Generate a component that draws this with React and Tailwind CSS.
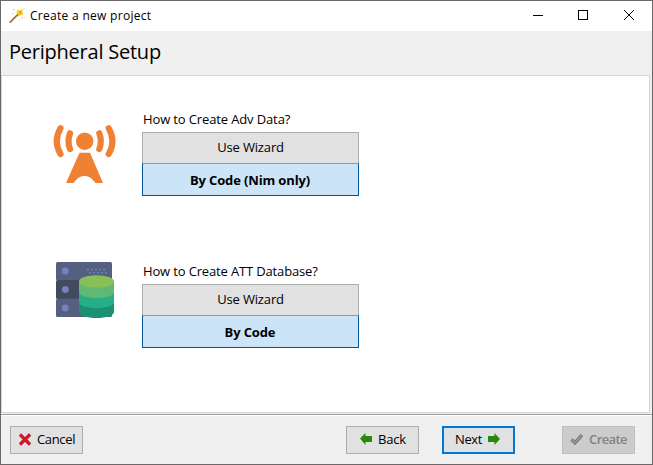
const ORANGE = '#f08033';

function WandIcon() {
  return (
    <svg className="h-4 w-4 shrink-0" viewBox="0 0 16 16">
      <path d="M.8 14.6 10 5.4" stroke="#8a6040" strokeWidth="1.5" />
      <path d="M1.5 14.7 9 7.2" stroke="#c79a68" strokeWidth=".6" />
      <path d="m8 1.2 2.3 1.5L13.6 1l-.3 3.2 1.2 2.4-2.9.2-2.1 1.9-.8-2.9L7 4.3l1.6-.9z" fill="#f2c914" />
      <path d="m10.2 3.6 1.8 0 .3 1.6-1.8.5z" fill="#d8a800" />
      <g fill="#f6d98a">
        <rect x="4" y="1" width="2" height="1.3" />
        <rect x="3" y="5" width="1.5" height="1.2" />
        <rect x="14.3" y="0" width="1.4" height="1.4" />
        <rect x="12" y="9" width="1.6" height="1.6" />
        <rect x="9.8" y="11" width="1.2" height="1.3" />
        <rect x="14.6" y="9.6" width="1" height="1.2" />
      </g>
    </svg>
  );
}

function AntennaIcon() {
  return (
    <svg className="block h-[60px] w-[64px]" viewBox="0 0 64 60">
      <circle cx="31.7" cy="17.2" r="8.7" fill={ORANGE} />
      <path d="M26.500 28.800h10.500L50 59h-7.500c-3.500-4.500-6.500-7-11-7s-7.500 2.500-11 7H13z" fill={ORANGE} />
      <g fill="none" stroke={ORANGE} strokeWidth="6.200" strokeLinecap="round">
        <path d="M17 9.300Q14 17.200 17 25" />
        <path d="M46.300 9.300Q49.300 17.200 46.300 25" />
        <path d="M7.500 4.300Q0 17.200 7.500 30" />
        <path d="M55.700 4.300Q63.200 17.200 55.700 30" />
      </g>
    </svg>
  );
}

function DatabaseIcon() {
  return (
    <svg className="block h-[57px] w-[60px]" viewBox="0 0 60 57">
      <rect x="0" y="0" width="56" height="18.500" rx="1.500" fill="#556080" />
      <rect x="0" y="18" width="56" height="19" rx="1.500" fill="#424a60" />
      <rect x="0" y="36.800" width="56" height="18.200" rx="1.500" fill="#556080" />
      <g fill="#7383bf">
        <circle cx="9.200" cy="9" r="3.400" />
        <circle cx="9.300" cy="27.500" r="3.400" />
        <circle cx="9.200" cy="46" r="3.400" />
      </g>
      <path d="M31 7.600h18M33 10.700h18" stroke="#7383bf" strokeWidth="1.500" strokeDasharray="1.700 2.400" />
      <path d="M23 40v10c0 3.700 8 6 17.500 6S58 53.700 58 50V40z" fill="#1a9172" />
      <path d="M23 30v10c0 3.700 8 6 17.500 6S58 43.700 58 40V30z" fill="#25ae88" />
      <path d="M23 19.500V30c0 3.700 8 6 17.500 6S58 33.700 58 30V19.500z" fill="#61b872" />
      <ellipse cx="40.500" cy="19.500" rx="17.500" ry="6.200" fill="#88c057" />
    </svg>
  );
}

function Choice({ selected }) {
  return (
    <div className="mt-[4px] w-[217px] text-center text-[13px] text-black">
      <button className="flex h-[31px] w-full items-center justify-center border border-b-0 border-[#adadad] bg-[#e1e1e1]">
        <span className="tracking-[-0.15px]">Use Wizard</span>
      </button>
      <button className="flex h-[33px] w-full items-center justify-center border border-[#00559b] border-t-[#999] bg-[#cce4f7] pr-px pt-[2px] font-bold">
        <span className="tracking-[-0.14px]">{selected}</span>
      </button>
    </div>
  );
}

export default function App() {
  return (
    <div className="flex h-[465px] w-[653px] flex-col border border-[#6a6869] bg-[#f0f0f0] text-[13px] text-black [font-family:'Open_Sans','Noto_Sans',sans-serif]">
      <div className="flex h-[30px] shrink-0 items-center bg-white pl-2">
        <WandIcon />
        <span className="ml-[5px] grow text-[12px] tracking-[0.29px]">Create a new project</span>
        <svg className="h-[30px] w-[137px]" viewBox="0 0 137 30" fill="none" stroke="#000" strokeWidth="1">
          <path d="M18 14.500h10" shapeRendering="crispEdges" />
          <rect x="63.500" y="9.500" width="9" height="9" shapeRendering="crispEdges" />
          <path d="m109 9 10 10M119 9l-10 10" />
        </svg>
      </div>
      <div className="flex h-[44px] shrink-0 items-center pb-[2px] pl-2 text-[20px] tracking-[-0.23px]">
        <span>Peripheral Setup</span>
      </div>
      <div className="mr-[2px] h-[338px] shrink-0 border border-[#d5d5d5] bg-white">
        <div className="flex pt-[34px]">
          <div className="ml-[51px] mt-[14px] w-[89px]"><AntennaIcon /></div>
          <div>
            <div className="h-[18px] pl-px leading-[18px] tracking-[-0.13px]">How to Create Adv Data?</div>
            <Choice selected="By Code (Nim only)" />
          </div>
        </div>
        <div className="flex pt-[66px]">
          <div className="ml-[54px] w-[86px]"><DatabaseIcon /></div>
          <div>
            <div className="h-[18px] pl-px leading-[18px] tracking-[-0.15px]">How to Create ATT Database?</div>
            <Choice selected="By Code" />
          </div>
        </div>
      </div>
      <div className="mt-px h-[2px] shrink-0 border-t border-[#a0a0a0] bg-white" />
      <div className="flex grow items-start pl-[9px] pr-[17px] pt-[10px]">
        <button className="flex h-7 w-[73px] items-center border border-[#adadad] bg-[#e1e1e1] pl-[7px]">
          <svg className="mb-px h-[14px] w-[14px]" viewBox="0 0 14 14"><path d="m2 1.500 10 10M12 1.500l-10 10" stroke="#b01822" strokeWidth="3.200" /><path d="m2 1.500 10 10M12 1.500l-10 10" stroke="#e0142a" strokeWidth="2" /></svg>
          <span className="ml-[5px] tracking-[-0.35px]">Cancel</span>
        </button>
        <button className="ml-[263px] flex h-7 w-[73px] items-center border border-[#adadad] bg-[#e1e1e1] pl-[13px]">
          <svg className="mb-[2px] h-3 w-3" viewBox="0 0 12 12"><path d="M0 5.500 5.500 0v3H12v6H5.500v3z" fill="#2a8810" /></svg>
          <span className="ml-[6px] tracking-[-0.2px]">Back</span>
        </button>
        <button className="ml-[23px] flex h-7 w-[73px] items-center border-2 border-[#0078d7] bg-[#e1e1e1] pl-[11px]">
          <span className="tracking-[-0.4px]">Next</span>
          <svg className="mb-[2px] ml-[6px] h-3 w-3" viewBox="0 0 12 12"><path d="M12 6 6.500 0v3H0v6h6.500v3z" fill="#2a8810" /></svg>
        </button>
        <button className="ml-auto flex h-7 w-[73px] items-center border border-[#bfbfbf] bg-[#cccccc] pl-[7px] text-[#838383]">
          <svg className="mb-[2px] h-[12px] w-[14px]" viewBox="0 0 14 12"><path d="m1.500 6.500 3.500 3.300L12 2" fill="none" stroke="#777" strokeWidth="3.400" /><path d="m1.500 6.500 3.500 3.300L12 2" fill="none" stroke="#999" strokeWidth="1.500" /></svg>
          <span className="ml-[5px] font-semibold tracking-[-0.6px]">Create</span>
        </button>
      </div>
    </div>
  );
}
